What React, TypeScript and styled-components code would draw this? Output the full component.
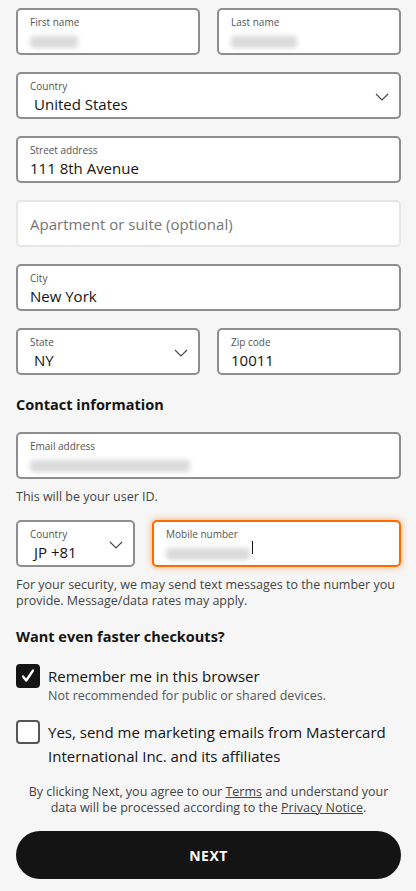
import styled, { createGlobalStyle } from "styled-components";

const GlobalStyle = createGlobalStyle`
  html, body {
    margin: 0;
    padding: 0;
    background: #f6f6f6;
  }
  body {
    font-family: "Open Sans", "Noto Sans", sans-serif;
    color: #141414;
  }
`;

const Page = styled.div`
  width: 416px;
  box-sizing: border-box;
  padding: 8px 15px 12px 16px;
  display: flex;
  flex-direction: column;
`;

const Stack = styled.div<{ $gap?: number; $top?: number }>`
  display: flex;
  flex-direction: column;
  gap: ${(p) => p.$gap ?? 17}px;
  margin-top: ${(p) => p.$top ?? 0}px;
`;

const Row = styled.div<{ $cols?: string; $gap?: number }>`
  display: grid;
  grid-template-columns: ${(p) => p.$cols ?? "1fr 1fr"};
  gap: ${(p) => p.$gap ?? 17}px;
`;

const Field = styled.div<{ $variant?: "default" | "empty" | "focus" }>`
  position: relative;
  height: 47px;
  box-sizing: border-box;
  background: #fff;
  border-radius: 5px;
  border: 2px solid
    ${(p) =>
      p.$variant === "empty" ? "#e6e6e6" : p.$variant === "focus" ? "#ff6a00" : "#8e8e8e"};
  box-shadow: ${(p) => (p.$variant === "focus" ? "0 0 6px 1px rgba(255, 120, 20, 0.45)" : "none")};
  padding: 5px 12px 0;
  display: flex;
  flex-direction: column;
  justify-content: ${(p) => (p.$variant === "empty" ? "center" : "flex-start")};
`;

const Label = styled.span`
  font-size: 10px;
  line-height: 14px;
  color: #555;
`;

const Value = styled.span<{ $select?: boolean }>`
  font-size: 15px;
  line-height: 21px;
  margin-top: 1px;
  color: #141414;
  padding-left: ${(p) => (p.$select ? 4 : 0)}px;
  white-space: nowrap;
`;

const Placeholder = styled.span`
  font-size: 15px;
  line-height: 20px;
  color: #767676;
  margin-top: -4px;
`;

const Blurred = styled.span<{ $w: number }>`
  display: block;
  width: ${(p) => p.$w}px;
  height: 12px;
  margin-top: 7px;
  border-radius: 4px;
  background: #dadada;
  filter: blur(2.5px);
`;

const Caret = styled.span`
  position: absolute;
  left: 98px;
  top: 19px;
  width: 1px;
  height: 13px;
  background: #141414;
`;

const Chevron = styled.svg`
  position: absolute;
  right: 10px;
  top: 19px;
  width: 14px;
  height: 8px;
`;

const Heading = styled.h2`
  margin: 0;
  font-size: 14.5px;
  font-weight: 700;
  line-height: 20px;
  color: #141414;
`;

const Hint = styled.p`
  margin: 0;
  font-size: 12.5px;
  line-height: 16px;
  color: #444;
`;

const CheckRow = styled.label`
  display: flex;
  gap: 8px;
  align-items: flex-start;
`;

const Box = styled.span<{ $checked?: boolean }>`
  flex: none;
  width: 24px;
  height: 24px;
  box-sizing: border-box;
  border-radius: 4px;
  background: ${(p) => (p.$checked ? "#141414" : "#fff")};
  border: 2px solid ${(p) => (p.$checked ? "#141414" : "#555")};
  display: flex;
  align-items: center;
  justify-content: center;
`;

const CheckText = styled.div`
  display: flex;
  flex-direction: column;
`;

const CheckTitle = styled.span`
  font-size: 15px;
  line-height: 24px;
  color: #141414;
`;

const CheckSub = styled.span`
  font-size: 12.5px;
  line-height: 16px;
  color: #555;
`;

const Legal = styled.p`
  margin: 0;
  text-align: center;
  font-size: 12.5px;
  line-height: 16px;
  color: #444;
  padding: 0 12px;

  a {
    color: #444;
    text-decoration: underline;
  }
`;

const NextButton = styled.button`
  height: 48px;
  width: 100%;
  border: none;
  border-radius: 24px;
  background: #141414;
  color: #fff;
  font-family: inherit;
  font-weight: 700;
  font-size: 14px;
  letter-spacing: 0.5px;
`;

const ChevronIcon = () => (
  <Chevron viewBox="0 0 14 8">
    <path d="M1 1l6 6 6-6" fill="none" stroke="#444" strokeWidth="1.1" />
  </Chevron>
);

const App = () => {
  return (
    <>
      <GlobalStyle />
      <Page>
        <Stack>
          <Row>
            <Field>
              <Label>First name</Label>
              <Blurred $w={48} />
            </Field>
            <Field>
              <Label>Last name</Label>
              <Blurred $w={66} />
            </Field>
          </Row>
          <Field>
            <Label>Country</Label>
            <Value $select>United States</Value>
            <ChevronIcon />
          </Field>
          <Field>
            <Label>Street address</Label>
            <Value>111 8th Avenue</Value>
          </Field>
          <Field $variant="empty">
            <Placeholder>Apartment or suite (optional)</Placeholder>
          </Field>
          <Field>
            <Label>City</Label>
            <Value>New York</Value>
          </Field>
          <Row>
            <Field>
              <Label>State</Label>
              <Value $select>NY</Value>
              <ChevronIcon />
            </Field>
            <Field>
              <Label>Zip code</Label>
              <Value>10011</Value>
            </Field>
          </Row>
        </Stack>

        <Stack $gap={17} $top={20}>
          <Heading>Contact information</Heading>
          <Stack $gap={10}>
            <Field>
              <Label>Email address</Label>
              <Blurred $w={160} />
            </Field>
            <Hint>This will be your user ID.</Hint>
          </Stack>
        </Stack>

        <Stack $gap={10} $top={15}>
          <Row $cols="119px 1fr">
            <Field>
              <Label>Country</Label>
              <Value $select>JP +81</Value>
              <ChevronIcon />
            </Field>
            <Field $variant="focus">
              <Label>Mobile number</Label>
              <Blurred $w={84} />
              <Caret />
            </Field>
          </Row>
          <Hint>
            For your security, we may send text messages to the number you
            provide. Message/data rates may apply.
          </Hint>
        </Stack>

        <Stack $gap={17} $top={18}>
          <Heading>Want even faster checkouts?</Heading>
          <Stack $gap={16}>
            <CheckRow>
              <Box $checked>
                <svg width="16" height="16" viewBox="0 0 16 16">
                  <path
                    d="M3 8.5l3.2 4L13 2.5"
                    fill="none"
                    stroke="#fff"
                    strokeWidth="2.4"
                    strokeLinecap="round"
                    strokeLinejoin="round"
                  />
                </svg>
              </Box>
              <CheckText>
                <CheckTitle>Remember me in this browser</CheckTitle>
                <CheckSub>Not recommended for public or shared devices.</CheckSub>
              </CheckText>
            </CheckRow>
            <CheckRow>
              <Box />
              <CheckText>
                <CheckTitle>
                  Yes, send me marketing emails from Mastercard International
                  Inc. and its affiliates
                </CheckTitle>
              </CheckText>
            </CheckRow>
          </Stack>
        </Stack>

        <Stack $gap={15} $top={16}>
          <Legal>
            By clicking Next, you agree to our <a>Terms</a> and understand your
            data will be processed according to the <a>Privacy Notice</a>.
          </Legal>
          <NextButton>NEXT</NextButton>
        </Stack>
      </Page>
    </>
  );
};

export default App;
